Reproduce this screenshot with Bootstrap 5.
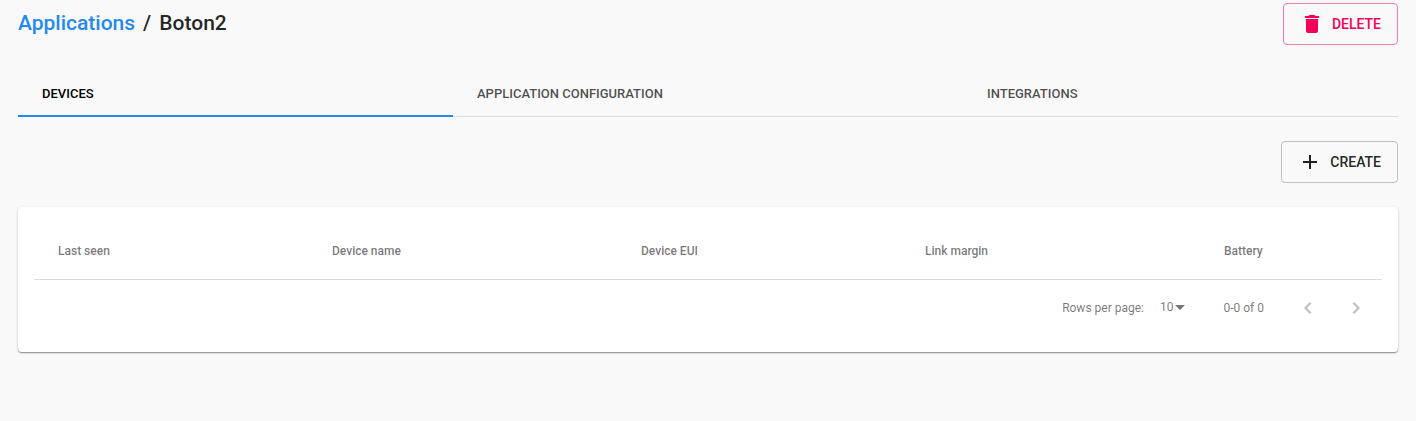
<!DOCTYPE html>
<html lang="en">
<head>
<meta charset="utf-8">
<meta name="viewport" content="width=device-width, initial-scale=1">
<title>Applications / Boton2</title>
<link href="https://cdn.jsdelivr.net/npm/bootstrap@5.3.0/dist/css/bootstrap.min.css" rel="stylesheet">
<style>
  body { background: #f9f9f9; color: rgba(0,0,0,.87); font-family: Roboto, sans-serif; font-size: 14px; }
  svg { fill: currentColor; flex-shrink: 0; }
  main { padding: 3px 18px 24px; }
  .title-line { font-size: 21px; font-weight: 500; line-height: 24px; padding-top: 8px; }
  .title-line a { color: #2289f0; }
  .action { --bs-btn-color: rgba(0,0,0,.87); --bs-btn-border-color: rgba(0,0,0,.23); --bs-btn-padding-x: 16px; --bs-btn-padding-y: 8px;
    --bs-btn-border-radius: 4px; height: 42px; font-size: 14px; font-weight: 500; line-height: 24px; }
  .action-danger { --bs-btn-color: #f50057; --bs-btn-border-color: rgba(245,0,87,.5); }
  .tab-row { margin-top: 24px; margin-bottom: 24px; height: 48px; grid-template-columns: 435px 510px 1fr; box-shadow: inset 0 -1px #dadada; }
  .tab-row .nav-link { color: rgba(0,0,0,.7); font-size: 13px; font-weight: 500; line-height: 20px; padding: 15px 24px 11px; border-bottom: 2px solid transparent; }
  .tab-row .nav-link.active { color: #000; border-bottom-color: #2289f0; }
  .panel { margin-top: 24px; height: 145px; border-radius: 4px;
    box-shadow: 0 1px 3px rgba(0,0,0,.2), 0 1px 1px rgba(0,0,0,.18), 0 1px 0 rgba(0,0,0,.14); }
  .device-table { table-layout: fixed; --bs-table-bg: transparent; }
  .device-table > :not(caption) > * > th { height: 57px; padding: 0 24px 2px; font-size: 12px; font-weight: 500; color: rgba(0,0,0,.54); vertical-align: middle; border-bottom-width: 0; box-shadow: inset 0 -1px #dadada; }
  .pager { height: 55px; margin-right: 2px; font-size: 12px; color: rgba(0,0,0,.54); }
  .rows-size { margin-top: -2px; margin-right: 31px; }
  .caret { margin-left: -5px; }
  .page-arrow { width: 48px; height: 48px; color: rgba(0,0,0,.26); }
  .range { margin-right: 20px; }
</style>
</head>
<body>
<main>
  <header class="d-flex justify-content-between align-items-start">
    <h1 class="title-line mb-0"><a href="#" class="text-decoration-none">Applications</a><span class="mx-2">/</span><span>Boton2</span></h1>
    <button class="btn action action-danger d-flex align-items-center gap-2" type="button">
      <svg width="24" height="24" viewBox="0 0 24 24"><path d="M6 19c0 1.1.9 2 2 2h8c1.1 0 2-.9 2-2V7H6v12zM19 4h-3.500l-1-1h-5l-1 1H5v2h14V4z"/></svg>DELETE
    </button>
  </header>
  <nav class="nav tab-row d-grid">
    <a class="nav-link active" href="#">DEVICES</a>
    <a class="nav-link" href="#">APPLICATION CONFIGURATION</a>
    <a class="nav-link" href="#">INTEGRATIONS</a>
  </nav>
  <div class="d-flex justify-content-end">
    <button class="btn action d-flex align-items-center gap-2" type="button">
      <svg width="24" height="24" viewBox="0 0 24 24"><path d="M19 13h-6v6h-2v-6H5v-2h6V5h2v6h6v2z"/></svg>CREATE
    </button>
  </div>
  <section class="card panel border-0 p-3">
    <table class="table device-table mb-0">
      <colgroup><col style="width:274px"><col style="width:309px"><col style="width:284px"><col style="width:299px"><col></colgroup>
      <thead><tr><th>Last seen</th><th>Device name</th><th>Device EUI</th><th>Link margin</th><th>Battery</th></tr></thead>
    </table>
    <div class="pager d-flex justify-content-end align-items-center">
      <span>Rows per page:</span>
      <span class="d-flex align-items-center ms-3 rows-size">10<svg class="caret" width="24" height="24" viewBox="0 0 24 24"><path d="M7 10l5 5 5-5z"/></svg></span>
      <span class="range">0-0 of 0</span>
      <button class="btn border-0 p-0 page-arrow d-flex align-items-center justify-content-center" type="button" aria-label="Previous page"><svg width="24" height="24" viewBox="0 0 24 24"><path d="M15.410 7.410L14 6l-6 6 6 6 1.410-1.410L10.830 12z"/></svg></button>
      <button class="btn border-0 p-0 page-arrow d-flex align-items-center justify-content-center" type="button" aria-label="Next page"><svg width="24" height="24" viewBox="0 0 24 24"><path d="M10 6L8.590 7.410 13.170 12l-4.580 4.590L10 18l6-6z"/></svg></button>
    </div>
  </section>
</main>
<script src="https://cdn.jsdelivr.net/npm/bootstrap@5.3.0/dist/js/bootstrap.bundle.min.js"></script>
</body>
</html>
